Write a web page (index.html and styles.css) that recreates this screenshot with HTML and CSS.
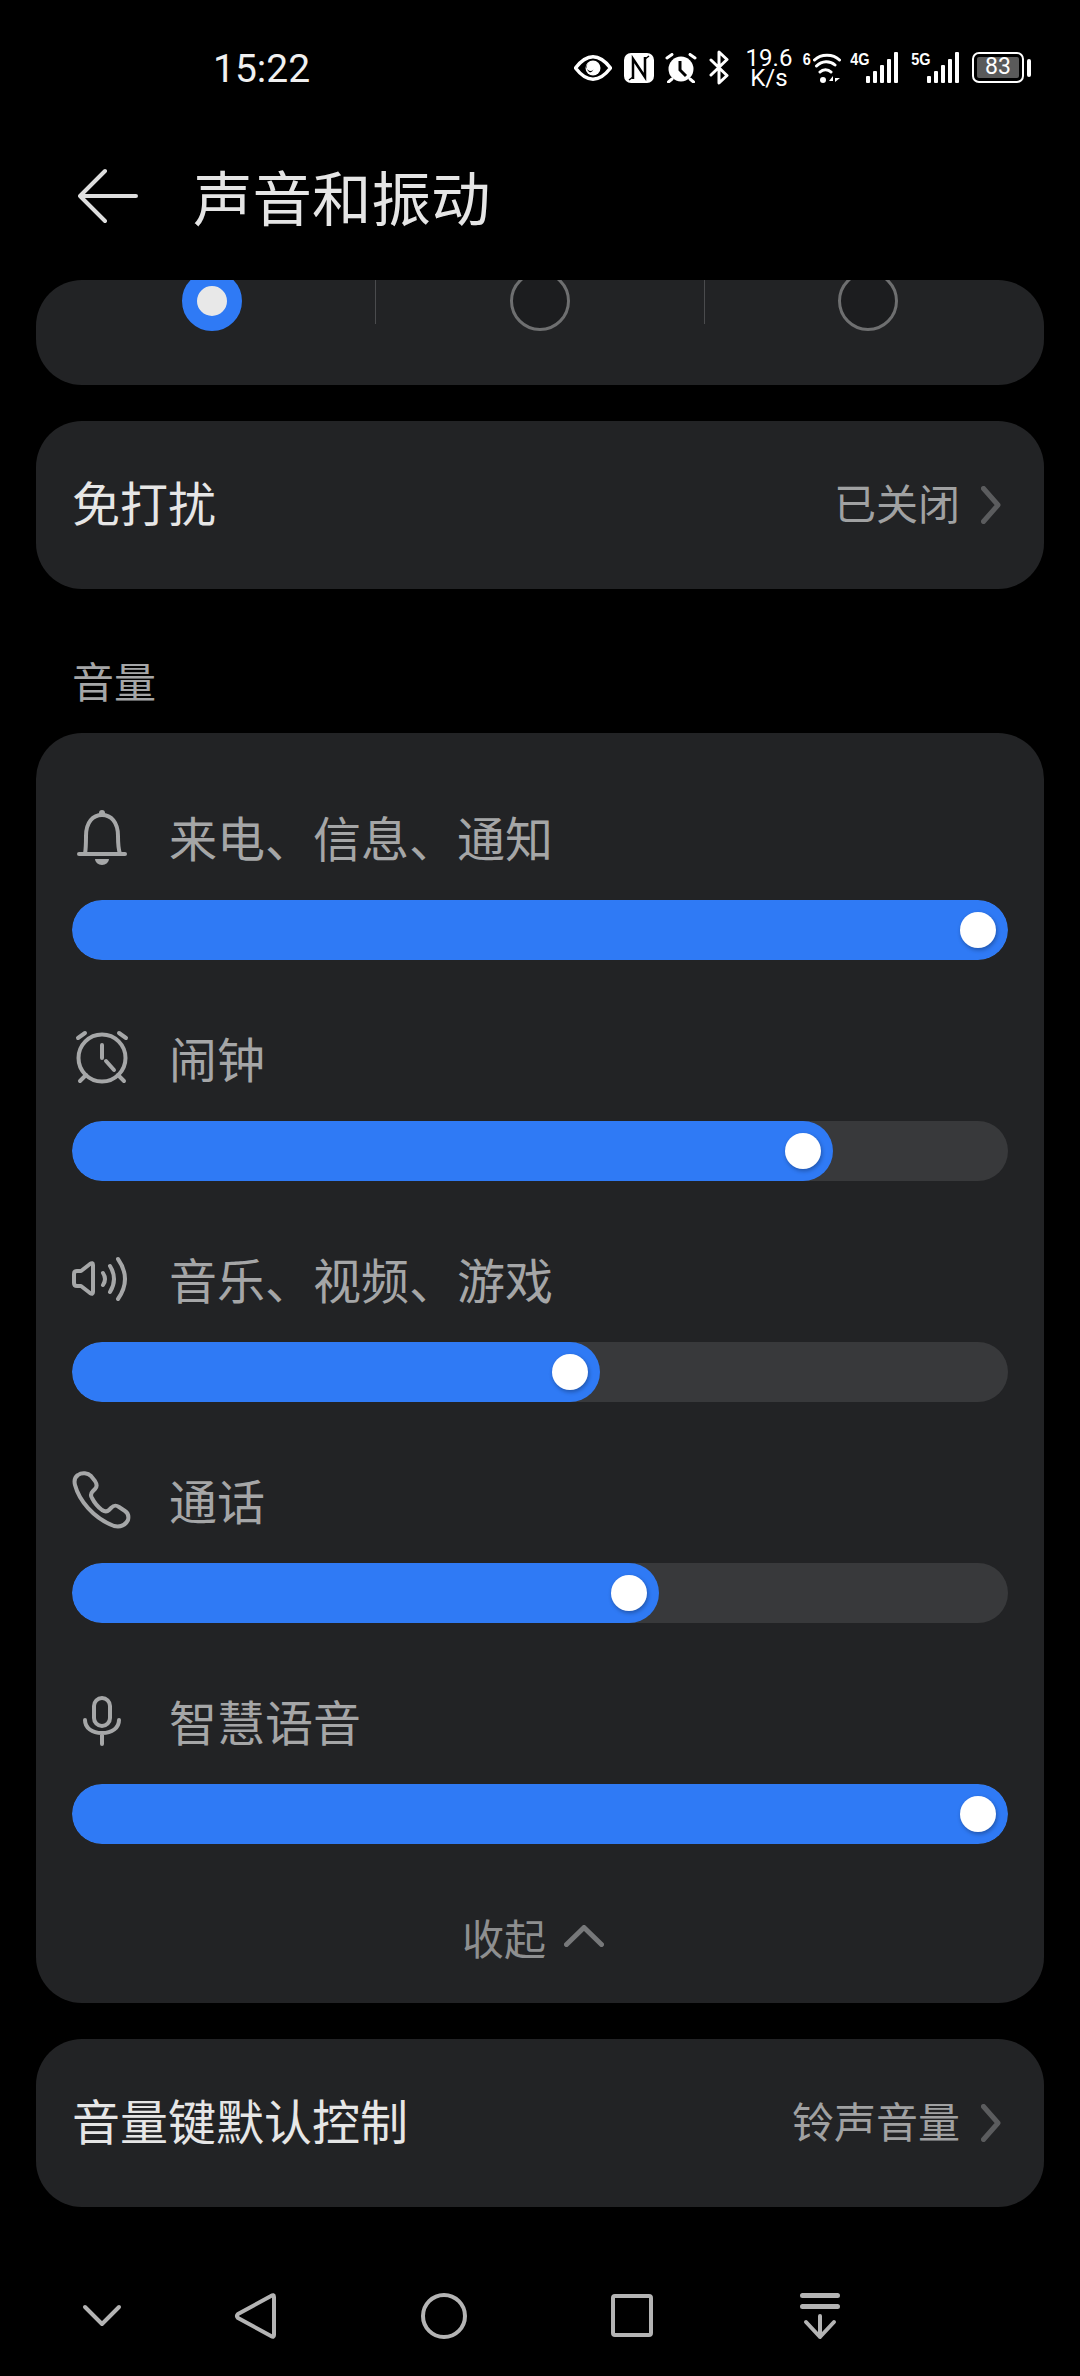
FILE: index.html
```html
<!DOCTYPE html>
<html lang="zh-CN">
<head>
    <meta charset="UTF-8">
    <meta name="viewport" content="width=device-width, initial-scale=1.0">
    <title>声音和振动</title>
    <link rel="stylesheet" href="styles.css">
</head>
<body>
    <div id="status-bar">
        <span class="time">15:22</span>
        <div class="status-icons">
            <svg class="st-eye" viewBox="0 0 38 26"><path d="M1.500 13C8 4.500 14 1.800 19 1.800S30 4.500 36.500 13C30 21.500 24 24.200 19 24.200S8 21.500 1.500 13Z" fill="none" stroke="#fff" stroke-width="3.500" stroke-linejoin="round"/><circle cx="19" cy="13" r="7.500" fill="#fff"/><path d="M13.500 9a4 4 0 0 0 6 5.500 5 5 0 0 1-3.500 3 6 6 0 0 1-2.500-8.500Z" fill="#000"/></svg>
            <svg class="st-nfc" viewBox="0 0 30 30"><rect x="0" y="0" width="30" height="30" rx="7" fill="#fff"/><path d="M9 26V6L21 24V4" fill="none" stroke="#000" stroke-width="2.500"/><path d="M5 27L9 24M25 3L21 6" stroke="#000" stroke-width="1.500"/></svg>
            <svg class="st-alarm" viewBox="0 0 32 30"><circle cx="16" cy="16" r="12.500" fill="#fff"/><path d="M15 8V17L21 23" fill="none" stroke="#000" stroke-width="3"/><path d="M2 5L7 1.500M30 5L25 1.500M3.500 29L7 26M28.500 29L25 26" stroke="#fff" stroke-width="3" stroke-linecap="round"/></svg>
            <svg class="st-bt" viewBox="0 0 20 35"><path d="M2 10L18 25.500L10 33V2L18 9.500L2 25" fill="none" stroke="#fff" stroke-width="3" stroke-linejoin="round" stroke-linecap="round"/></svg>
            <div class="speed"><span>19.6</span><span>K/s</span></div>
            <span class="net-label wifi-label">6</span>
            <svg class="st-wifi" viewBox="0 0 28 30"><path d="M1.500 7C8 0.500 20 0.500 26.500 7M3.500 13C9 7.500 17 7.500 22 12M7 19C10 16 15 16 18 19" fill="none" stroke="#fff" stroke-width="3" stroke-linecap="round"/><circle cx="10" cy="27" r="3" fill="#fff"/><path d="M20 23L16 28H20V23ZM22 23V29L27 25H22Z" fill="#fff"/></svg>
            <span class="net-label label-4g">4G</span>
            <svg class="st-bars" viewBox="0 0 32 32"><g fill="#fff"><rect x="0" y="24" width="4" height="7" rx="1"/><rect x="7" y="19" width="4" height="12" rx="1"/><rect x="14" y="13" width="4" height="18" rx="1"/><rect x="21" y="7" width="4" height="24" rx="1"/><rect x="28" y="0" width="4" height="31" rx="1"/></g></svg>
            <span class="net-label label-5g">5G</span>
            <svg class="st-bars" viewBox="0 0 32 32"><g fill="#fff"><rect x="0" y="24" width="4" height="7" rx="1"/><rect x="7" y="19" width="4" height="12" rx="1"/><rect x="14" y="13" width="4" height="18" rx="1"/><rect x="21" y="7" width="4" height="24" rx="1"/><rect x="28" y="0" width="4" height="31" rx="1"/></g></svg>
            <div class="battery"><div class="battery-fill">83</div></div>
            <div class="battery-tip"></div>
        </div>
    </div>

    <div id="header">
        <svg class="back-icon" viewBox="0 0 60 56"><path d="M27 3L2 28L27 53M2 28H58" fill="none" stroke="#dedede" stroke-width="4" stroke-linecap="round" stroke-linejoin="round"/></svg>
        <h1>声音和振动</h1>
    </div>

    <div id="content">
        <div class="card mode-card">
            <div class="mode-row">
                <div class="mode-cell"><span class="radio radio-on"></span></div>
                <div class="mode-divider"></div>
                <div class="mode-cell"><span class="radio"></span></div>
                <div class="mode-divider"></div>
                <div class="mode-cell"><span class="radio"></span></div>
            </div>
        </div>

        <div class="card link-card dnd-card">
            <span class="link-title">免打扰</span>
            <span class="link-value">已关闭</span>
            <svg class="chevron" viewBox="0 0 20 38"><path d="M2.500 2.500L17 19L2.500 35.500" fill="none" stroke="#5b5c5e" stroke-width="5" stroke-linecap="round" stroke-linejoin="round"/></svg>
        </div>

        <div class="section-label">音量</div>

        <div class="card volume-card">
            <div class="vol-row">
                <div class="vol-label">
                    <svg class="vol-icon" viewBox="0 0 60 60"><g fill="none" stroke="#a6a7a8" stroke-width="4" stroke-linecap="round"><path d="M13 46C14 40 14 34 14 28C14 14 21 7 30 7C39 7 46 14 46 28C46 34 46 40 48 46"/><path d="M7 46H53"/></g><circle cx="30" cy="5" r="3" fill="#a6a7a8"/><path d="M23 51H37A7 6 0 0 1 23 51Z" fill="#a6a7a8"/></svg>
                    <span>来电、信息、通知</span>
                </div>
                <div class="slider"><div class="slider-fill" style="width: 100%"><span class="thumb"></span></div></div>
            </div>
            <div class="vol-row">
                <div class="vol-label">
                    <svg class="vol-icon" viewBox="0 0 60 60"><g fill="none" stroke="#a6a7a8" stroke-width="4" stroke-linecap="round"><circle cx="30" cy="29" r="23.500"/><path d="M30 16V29M34 32L42 41M6 9L13 4M54 9L47 4M8 52L14 46M52 52L46 46"/></g></svg>
                    <span>闹钟</span>
                </div>
                <div class="slider"><div class="slider-fill" style="width: 81.3%"><span class="thumb"></span></div></div>
            </div>
            <div class="vol-row">
                <div class="vol-label">
                    <svg class="vol-icon" viewBox="0 0 60 60"><g fill="none" stroke="#a6a7a8" stroke-width="4" stroke-linecap="round" stroke-linejoin="round"><path d="M21 15V42Q21 45 18 43L9 36H5Q2 36 2 33V24Q2 21 5 21H9L18 14Q21 12 21 15Z"/><path d="M31 23Q35 29 31 35M38 16Q46 29 38 42M46 9Q60 29 46 49"/></g></svg>
                    <span>音乐、视频、游戏</span>
                </div>
                <div class="slider"><div class="slider-fill" style="width: 56.4%"><span class="thumb"></span></div></div>
            </div>
            <div class="vol-row">
                <div class="vol-label">
                    <svg class="vol-icon" viewBox="0 0 60 60"><path d="M6 4C3 6 2 10 3 14C7 29 21 47 42 55C47 56 53 55 56 49C57 45 56 42 53 40L47 36C44 34 42 34 39 37L37 39C35 41 33 41 30 39C26 36 22 31 20 27C18 24 19 22 21 20L23 18C25 16 25 13 23 10L19 5C16 2 10 1 6 4Z" fill="none" stroke="#a6a7a8" stroke-width="4" stroke-linejoin="round"/></svg>
                    <span>通话</span>
                </div>
                <div class="slider"><div class="slider-fill" style="width: 62.7%"><span class="thumb"></span></div></div>
            </div>
            <div class="vol-row">
                <div class="vol-label">
                    <svg class="vol-icon" viewBox="0 0 60 60"><g fill="none" stroke="#a6a7a8" stroke-width="4" stroke-linecap="round"><rect x="22" y="6" width="16" height="28" rx="8"/><path d="M13 28C13 36 20 41 30 41C40 41 47 36 47 28M30 41V52"/></g></svg>
                    <span>智慧语音</span>
                </div>
                <div class="slider"><div class="slider-fill" style="width: 100%"><span class="thumb"></span></div></div>
            </div>
            <div class="collapse-row">
                <span>收起</span>
                <svg class="collapse-icon" viewBox="0 0 40 22"><path d="M2.500 19.500L20 2.500L37.500 19.500" fill="none" stroke="#77787a" stroke-width="5" stroke-linecap="round" stroke-linejoin="round"/></svg>
            </div>
        </div>

        <div class="card link-card">
            <span class="link-title">音量键默认控制</span>
            <span class="link-value">铃声音量</span>
            <svg class="chevron" viewBox="0 0 20 38"><path d="M2.500 2.500L17 19L2.500 35.500" fill="none" stroke="#5b5c5e" stroke-width="5" stroke-linecap="round" stroke-linejoin="round"/></svg>
        </div>
    </div>

    <div id="nav-bar">
        <svg class="nav-icon nav-hide" viewBox="0 0 60 60"><path d="M13 21L30 38L47 21" fill="none" stroke="#b4b4b4" stroke-width="4" stroke-linecap="round" stroke-linejoin="round"/></svg>
        <svg class="nav-icon" viewBox="0 0 60 60"><path d="M48 11V49Q48 52 45 50L12 32Q10 30 12 28L45 10Q48 8 48 11Z" fill="none" stroke="#b4b4b4" stroke-width="4" stroke-linejoin="round"/></svg>
        <svg class="nav-icon" viewBox="0 0 60 60"><circle cx="30" cy="30" r="21" fill="none" stroke="#b4b4b4" stroke-width="4"/></svg>
        <svg class="nav-icon" viewBox="0 0 60 60"><rect x="11" y="10" width="38" height="39" rx="2" fill="none" stroke="#b4b4b4" stroke-width="4"/></svg>
        <svg class="nav-icon" viewBox="0 0 60 60"><g fill="none" stroke="#b4b4b4" stroke-linecap="round" stroke-linejoin="round"><path d="M12.500 9.500H47.500M12.500 20.500H47.500" stroke-width="5"/><path d="M30 30V51M16 36L30 51L44 36" stroke-width="4"/></g></svg>
    </div>
</body>
</html>
```

FILE: styles.css
```css
* {
    margin: 0;
    padding: 0;
    box-sizing: border-box;
}

html, body {
    width: 1080px;
    height: 2376px;
    background-color: #000;
    overflow: hidden;
}

body {
    font-family: "Noto Sans CJK SC", "Noto Sans", sans-serif;
    color: #e6e6e6;
}

svg {
    display: block;
    flex-shrink: 0;
}

/* Status bar */
#status-bar {
    height: 135px;
    padding: 0 49px 0 213px;
    display: flex;
    justify-content: space-between;
    align-items: center;
}

.time {
    margin-top: 2px;
    font-family: Roboto, sans-serif;
    font-size: 39px;
    color: #f0f0f0;
}

.status-icons {
    display: flex;
    align-items: center;
}

.st-eye { width: 38px; height: 26px; }
.st-nfc { width: 30px; height: 30px; margin-left: 12px; }
.st-alarm { width: 32px; height: 30px; margin-left: 11px; }
.st-bt { width: 20px; height: 35px; margin-left: 12px; }
.st-wifi { width: 28px; height: 30px; margin-left: 2px; }
.st-bars { width: 32px; height: 32px; }

.speed {
    width: 46px;
    margin-left: 17px;
    display: flex;
    flex-direction: column;
    align-items: center;
    font-family: Roboto, sans-serif;
    font-size: 24px;
    line-height: 20px;
    color: #fff;
}

.net-label {
    margin-bottom: 16px;
    font-family: "Liberation Sans", sans-serif;
    font-weight: 700;
    font-size: 17px;
    line-height: 15px;
    color: #fff;
    transform: scaleX(0.85);
}

.wifi-label { width: 9px; margin-left: 10px; }
.label-4g { width: 17px; margin-left: 8px; }
.label-5g { width: 17px; margin-left: 12px; }

.battery {
    width: 52px;
    height: 31px;
    margin-left: 13px;
    padding: 3px;
    border: 2.5px solid #fff;
    border-radius: 7px;
}

.battery-fill {
    height: 100%;
    background-color: #5a5a5a;
    border-radius: 2px;
    font-family: Roboto, sans-serif;
    font-size: 23px;
    line-height: 20px;
    text-align: center;
    color: #fff;
}

.battery-tip {
    width: 4px;
    height: 18px;
    margin-left: 3px;
    background-color: #fff;
    border-radius: 2px;
}

/* Header */
#header {
    height: 122px;
    padding: 0 0 0 78px;
    display: flex;
    align-items: center;
}

.back-icon {
    width: 60px;
    height: 56px;
}

#header h1 {
    margin: 0 0 3px 55px;
    font-size: 59.5px;
    font-weight: 400;
    color: #e5e5e5;
    line-height: 76px;
}

/* Cards */
#content {
    height: 1968px;
    margin-top: 23px;
    padding: 0 36px;
}

.card {
    background-color: #222325;
    border-radius: 46px;
    overflow: hidden;
}

.mode-card {
    height: 105px;
    margin-bottom: 36px;
}

.mode-row {
    margin-top: -9px;
    padding: 0 12px;
    display: flex;
    align-items: flex-start;
}

.mode-cell {
    flex: 1;
    display: flex;
    justify-content: center;
}

.mode-divider {
    width: 1px;
    height: 53px;
    background-color: #4a4b4d;
}

.radio {
    width: 60px;
    height: 60px;
    border: 3px solid #6e6f70;
    border-radius: 50%;
    background-color: #1c1d1f;
}

.radio-on {
    border: 15px solid #2f7af5;
    background-color: #e8e8e8;
}

.link-card {
    height: 168px;
    padding: 0 43px 0 36px;
    display: flex;
    align-items: center;
}

.link-title {
    flex: 1;
    margin-bottom: 8px;
    font-size: 48px;
    font-weight: 400;
    color: #e6e6e6;
}

.link-value {
    margin-bottom: 8px;
    font-size: 42px;
    color: #a0a1a2;
}

.chevron {
    width: 20px;
    height: 38px;
    margin-left: 21px;
}

.section-label {
    height: 144px;
    padding: 61px 0 0 36px;
    font-size: 42px;
    line-height: 60px;
    color: #a5a6a7;
}

/* Volume sliders */
.volume-card {
    height: 1270px;
    margin-bottom: 36px;
    padding: 67px 36px 0;
    display: flex;
    flex-direction: column;
    gap: 61px;
}

.vol-row {
    display: flex;
    flex-direction: column;
    gap: 24px;
}

.vol-label {
    height: 76px;
    display: flex;
    align-items: center;
    gap: 37px;
    font-size: 48px;
    color: #a5a6a7;
}

.vol-label span {
    margin-bottom: 5px;
}

.vol-icon {
    width: 60px;
    height: 60px;
}

.slider {
    height: 60px;
    background-color: #38393b;
    border-radius: 30px;
    overflow: hidden;
}

.slider-fill {
    height: 100%;
    padding-right: 12px;
    background-color: #2f7af5;
    border-radius: 30px;
    display: flex;
    justify-content: flex-end;
    align-items: center;
}

.thumb {
    width: 36px;
    height: 36px;
    background-color: #fff;
    border-radius: 50%;
    box-shadow: 1px 2px 4px rgba(0, 0, 0, 0.3);
}

.collapse-row {
    height: 60px;
    margin-top: 1px;
    padding-right: 14px;
    display: flex;
    justify-content: center;
    align-items: center;
    gap: 18px;
    font-size: 42px;
    color: #8e8f90;
}

.collapse-icon {
    width: 40px;
    height: 22px;
}

/* Navigation bar */
#nav-bar {
    height: 136px;
    padding: 0 0 0 72px;
    display: flex;
    align-items: center;
    gap: 128px;
}

.nav-icon {
    width: 60px;
    height: 60px;
}

.nav-hide {
    margin-right: -34px;
}
```
